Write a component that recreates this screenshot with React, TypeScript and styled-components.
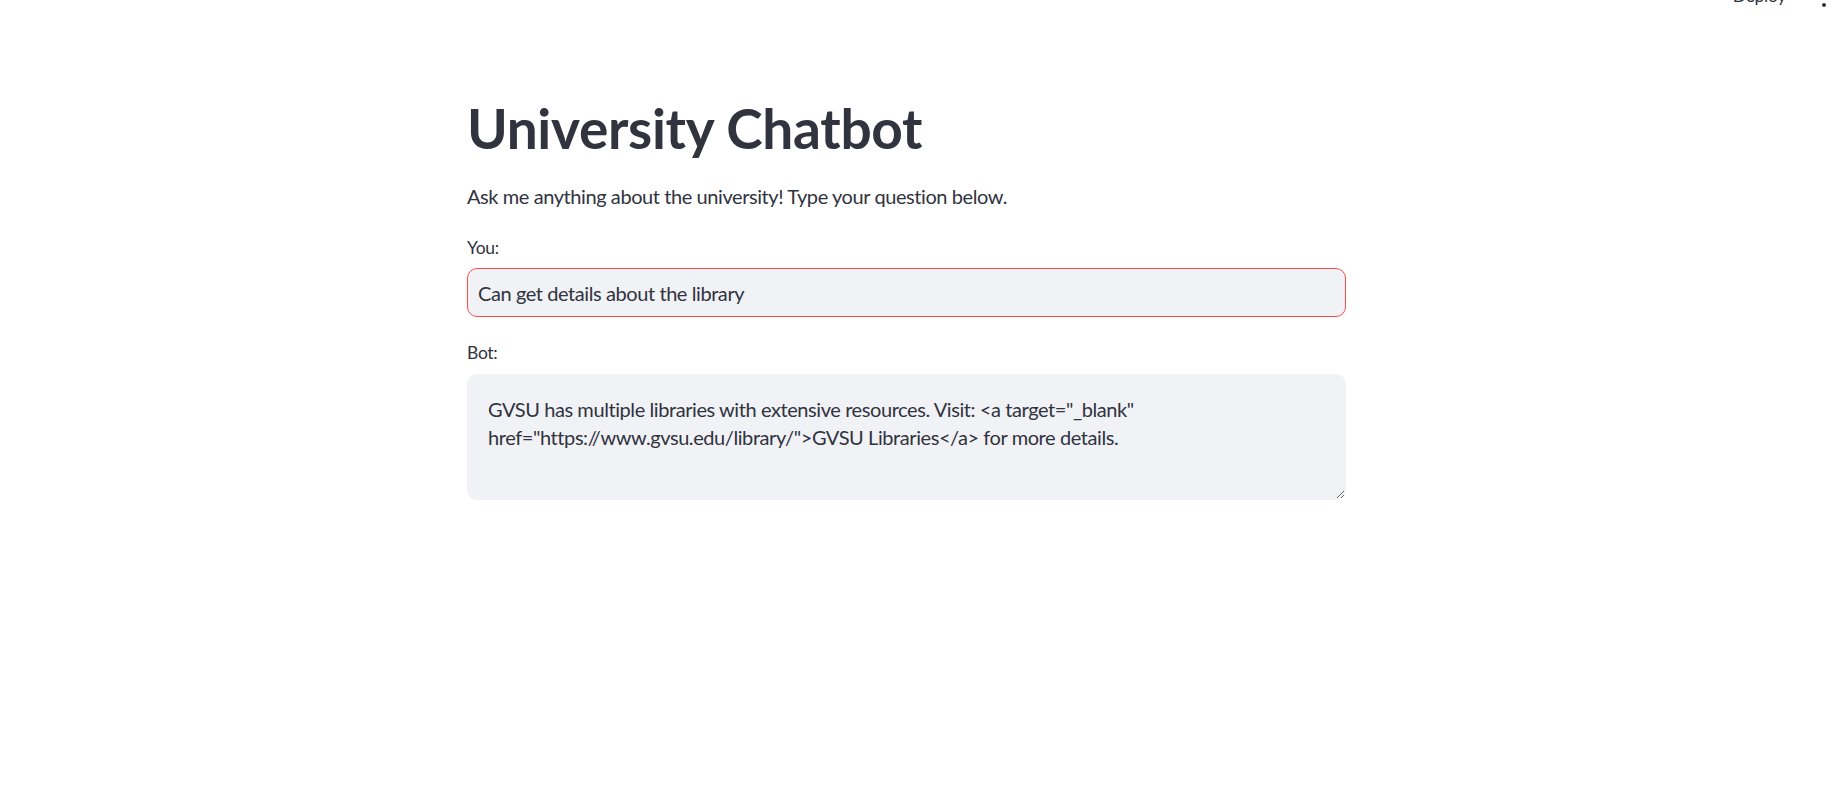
import styled, { createGlobalStyle } from "styled-components";

const GlobalStyle = createGlobalStyle`
  html, body {
    margin: 0;
    padding: 0;
    background: #ffffff;
  }
  body {
    font-family: Lato, "Noto Sans", sans-serif;
    color: #31333f;
    overflow: hidden;
  }
`;

const botAnswer =
  'GVSU has multiple libraries with extensive resources. Visit: <a target="_blank" href="https://www.gvsu.edu/library/">GVSU Libraries</a> for more details.';

function App() {
  return (
    <Page>
      <GlobalStyle />
      <Toolbar>
        <DeployButton>Deploy</DeployButton>
        <MenuDots>
          <span />
          <span />
          <span />
        </MenuDots>
      </Toolbar>
      <Main>
        <Block>
          <Title>University Chatbot</Title>
          <Intro>Ask me anything about the university! Type your question below.</Intro>
          <Field>
            <Label>You:</Label>
            <TextInput type="text" defaultValue="Can get details about the library" />
          </Field>
          <Field $gap={7}>
            <Label>Bot:</Label>
            <AnswerArea readOnly defaultValue={botAnswer} />
          </Field>
        </Block>
      </Main>
    </Page>
  );
}

const Page = styled.div`
  position: relative;
  width: 100%;
  min-height: 100vh;
`;

const Toolbar = styled.div`
  position: absolute;
  top: -17px;
  right: 17px;
  display: flex;
  align-items: center;
  gap: 36px;
`;

const DeployButton = styled.div`
  font-size: 17.5px;
  line-height: 21px;
  letter-spacing: -0.3px;
  color: #31333f;
`;

const MenuDots = styled.div`
  display: flex;
  flex-direction: column;
  gap: 3px;
  padding-top: 6px;

  span {
    width: 4px;
    height: 4px;
    border-radius: 50%;
    background: #31333f;
  }
`;

const Main = styled.main`
  display: flex;
  justify-content: center;
  padding: 95px 30px 0 0;
`;

const Block = styled.div`
  width: 879px;
  display: flex;
  flex-direction: column;
`;

const Title = styled.h1`
  margin: 0;
  font-size: 55px;
  font-weight: 700;
  line-height: 66px;
  color: #31333f;
  letter-spacing: -0.3px;
`;

const Intro = styled.p`
  margin: 19px 0 0;
  font-size: 20px;
  line-height: 32px;
  letter-spacing: -0.42px;
`;

const Field = styled.div<{ $gap?: number }>`
  display: flex;
  flex-direction: column;
  gap: ${({ $gap }) => $gap ?? 6}px;
  margin-top: 22px;
`;

const Label = styled.label`
  font-size: 17.5px;
  line-height: 28px;
  letter-spacing: -0.3px;
  color: #31333f;
`;

const TextInput = styled.input`
  box-sizing: border-box;
  height: 49px;
  width: 100%;
  padding: 0 10px;
  border: 1px solid #ff4b4b;
  border-radius: 10px;
  background: #f0f2f6;
  font-family: Lato, "Noto Sans", sans-serif;
  font-size: 20px;
  letter-spacing: -0.42px;
  color: #31333f;
  outline: none;
`;

const AnswerArea = styled.textarea`
  box-sizing: border-box;
  height: 126px;
  width: 100%;
  padding: 20px;
  border: 1px solid #f0f2f6;
  border-radius: 10px;
  background: #f0f2f6;
  font-family: Lato, "Noto Sans", sans-serif;
  font-size: 20px;
  line-height: 28px;
  letter-spacing: -0.42px;
  color: #31333f;
  outline: none;
  resize: vertical;
`;

export default App;
